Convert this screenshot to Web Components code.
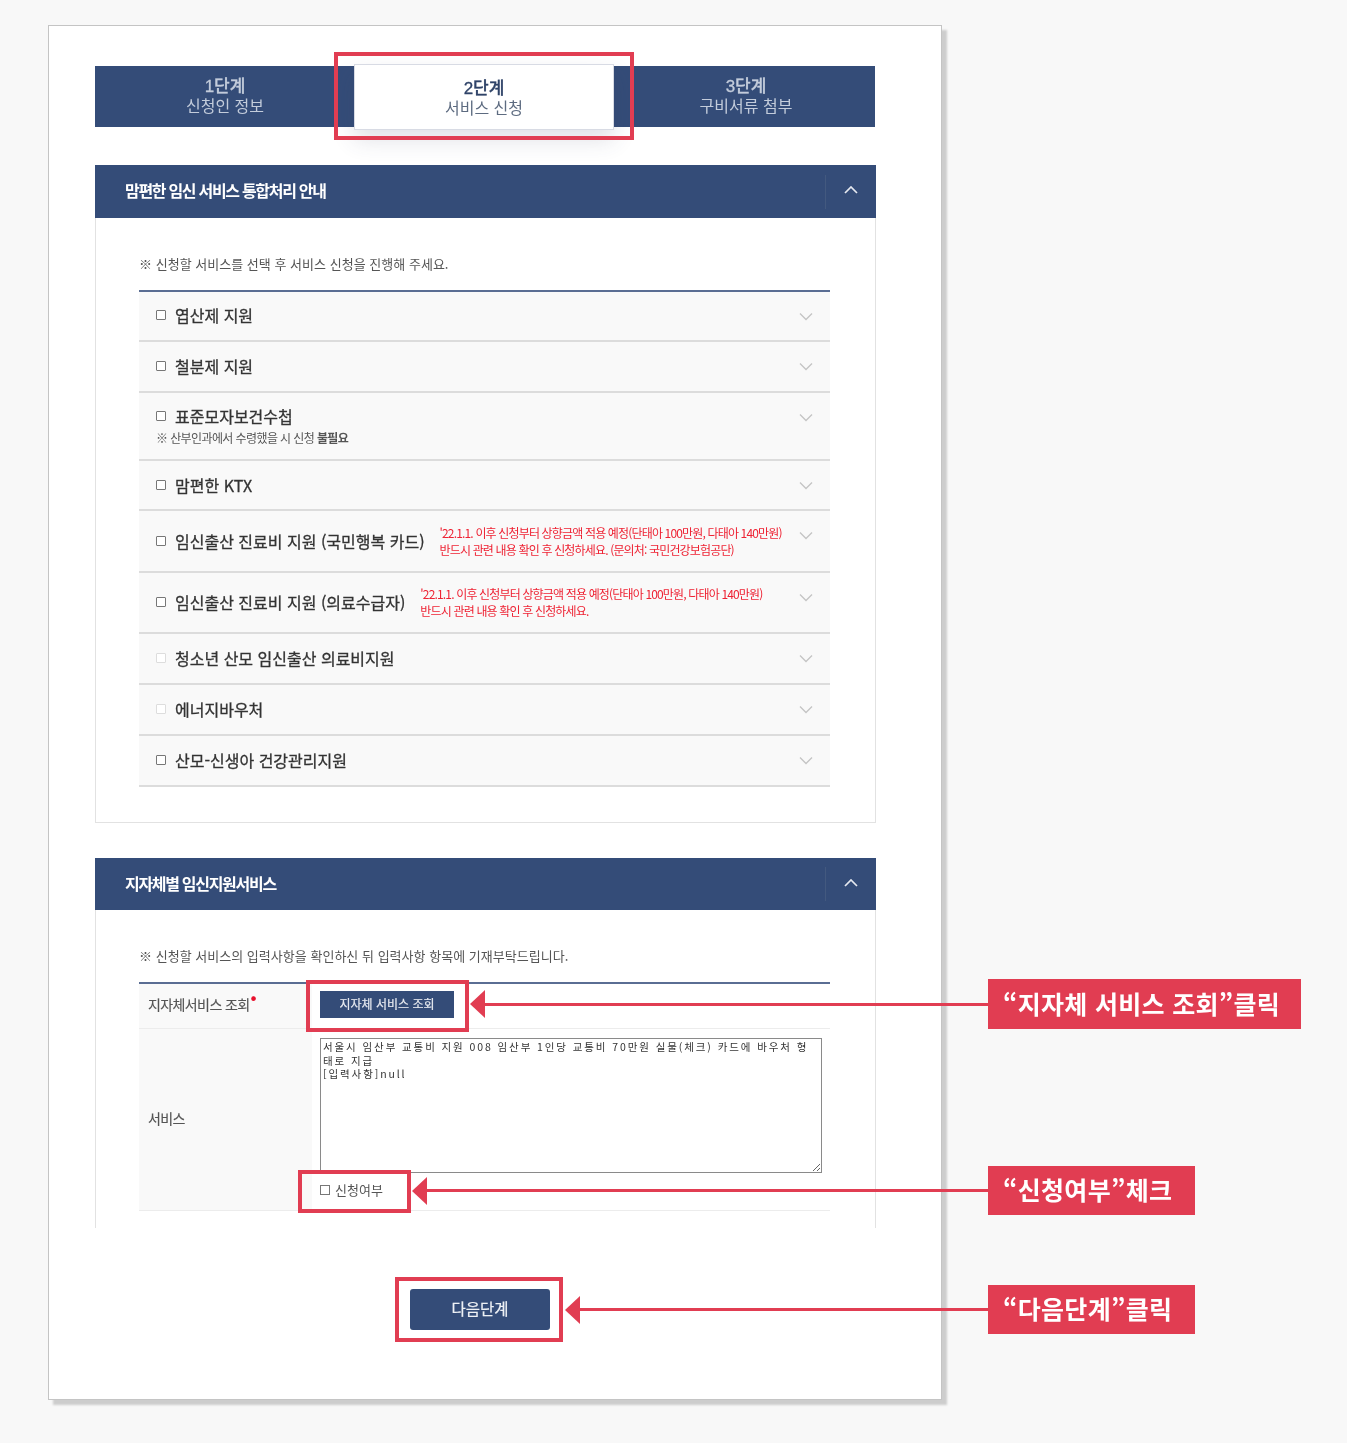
<!DOCTYPE html>
<html lang="ko">
<head>
<meta charset="utf-8">
<title>서비스 신청</title>
<style>
    html, body { margin: 0; padding: 0; background: #f8f8f8; }
    body { font-family: "Noto Sans CJK KR", "Noto Sans", sans-serif; color: #333; }
    b { font-weight: 700; }
</style>
</head>
<body>
<doc-page>
    <step-tabs></step-tabs>

    <service-panel title="맘편한 임신 서비스 통합처리 안내" notice="※ 신청할 서비스를 선택 후 서비스 신청을 진행해 주세요." pad="35">
        <service-row label="엽산제 지원" h="50" lift></service-row>
        <service-row label="철분제 지원" h="51" lift></service-row>
        <service-row label="표준모자보건수첩" h="68" stack>
            <span slot="sub">※ 산부인과에서 수령했을 시 신청 <b>불필요</b></span>
        </service-row>
        <service-row label="맘편한 KTX" h="50"></service-row>
        <service-row label="임신출산 진료비 지원 (국민행복 카드)" h="62">
            <span slot="note">'22.1.1. 이후 신청부터 상향금액 적용 예정(단태아 100만원, 다태아 140만원)<br>반드시 관련 내용 확인 후 신청하세요. (문의처: 국민건강보험공단)</span>
        </service-row>
        <service-row label="임신출산 진료비 지원 (의료수급자)" h="61" lift>
            <span slot="note">'22.1.1. 이후 신청부터 상향금액 적용 예정(단태아 100만원, 다태아 140만원)<br>반드시 관련 내용 확인 후 신청하세요.</span>
        </service-row>
        <service-row label="청소년 산모 임신출산 의료비지원" h="51" disabled lift></service-row>
        <service-row label="에너지바우처" h="51" disabled lift></service-row>
        <service-row label="산모-신생아 건강관리지원" h="51" lift></service-row>
    </service-panel>

    <service-panel title="지자체별 임신지원서비스" notice="※ 신청할 서비스의 입력사항을 확인하신 뒤 입력사항 항목에 기재부탁드립니다." pad="17" open-bottom>
        <local-form></local-form>
    </service-panel>

    <next-button>다음단계</next-button>

    <red-frame slot="over" x="334" y="52" w="300" h="88"></red-frame>
    <red-frame slot="over" x="306" y="980" w="163" h="52"></red-frame>
    <red-frame slot="over" x="298" y="1170" w="113" h="43"></red-frame>
    <red-frame slot="over" x="395" y="1277" w="168" h="65"></red-frame>

    <call-out slot="over" tip="470" y="979" w="313" h="50">“지자체 서비스 조회”클릭</call-out>
    <call-out slot="over" tip="412" y="1166" w="207" h="49">“신청여부”체크</call-out>
    <call-out slot="over" tip="565" y="1285" w="207" h="49">“다음단계”클릭</call-out>
</doc-page>

<script>
class docPage extends HTMLElement {
    constructor() {
        super();
        this.attachShadow({ mode: 'open' });
    }
    connectedCallback() {
        this.shadowRoot.innerHTML = `
            <style>
                :host {
                    display: block;
                    position: relative;
                    height: 1443px;
                    padding-top: 25px;
                    box-sizing: border-box;
                    overflow: hidden;
                }
                .sheet {
                    width: 894px;
                    height: 1375px;
                    margin-left: 48px;
                    padding: 40px 0 0 46px;
                    box-sizing: border-box;
                    background: #fff;
                    border: 1px solid #c4c4c4;
                    box-shadow: 5px 5px 2px #cdcdcd;
                    filter: blur(0.55px);
                }
            </style>
            <div class="sheet"><slot></slot></div>
            <slot name="over"></slot>
        `;
    }
}

class stepTabs extends HTMLElement {
    constructor() {
        super();
        this.attachShadow({ mode: 'open' });
    }
    connectedCallback() {
        const steps = [['1단계', '신청인 정보'], ['2단계', '서비스 신청'], ['3단계', '구비서류 첨부']];
        this.shadowRoot.innerHTML = `
            <style>
                :host {
                    display: grid;
                    grid-template-columns: 260px 260px 260px;
                    width: 780px;
                    height: 61px;
                    margin-bottom: 38px;
                    background: #344c78;
                    font-family: "Liberation Sans", "Noto Sans CJK KR", sans-serif;
                }
                div {
                    display: flex;
                    flex-direction: column;
                    align-items: center;
                    justify-content: center;
                    padding-top: 1px;
                    box-sizing: border-box;
                    color: #c3ccdb;
                    font-size: 16px;
                    line-height: 20px;
                }
                div:last-child { padding-left: 2px; }
                b { font-weight: 500; font-size: 17px; -webkit-text-stroke: .3px; }
                .on {
                    margin: -2px 1px -3px -1px;
                    padding-top: 4px;
                    background: #fff;
                    color: #5d6b80;
                    border: 1px solid #d8dbe4;
                    box-shadow: 0 10px 22px rgba(60, 70, 100, .16);
                    position: relative;
                }
                .on b { color: #2f4368; }
            </style>
            ${steps.map((s, i) => `<div class="${i === 1 ? 'on' : ''}"><b>${s[0]}</b><span>${s[1]}</span></div>`).join('')}
        `;
    }
}

class servicePanel extends HTMLElement {
    constructor() {
        super();
        this.attachShadow({ mode: 'open' });
    }
    connectedCallback() {
        const open = this.hasAttribute('open-bottom');
        this.shadowRoot.innerHTML = `
            <style>
                :host {
                    display: block;
                    width: 781px;
                    margin-bottom: 35px;
                }
                header {
                    display: flex;
                    align-items: center;
                    justify-content: space-between;
                    height: ${open ? 52 : 53}px;
                    background: #344c78;
                    color: #fff;
                    padding: 0 0 3px 30px;
                    box-sizing: border-box;
                }
                h2 {
                    margin: 0;
                    font-size: 16px;
                    font-weight: 700;
                    letter-spacing: -1.3px;
                }
                .toggle {
                    display: flex;
                    align-items: center;
                    justify-content: center;
                    width: 51px;
                    height: 34px;
                    margin-top: 3px;
                    padding-bottom: 3px;
                    box-sizing: border-box;
                    border-left: 1px solid #43597f;
                }
                .body {
                    padding: 34px 45px ${this.getAttribute('pad')}px 43px;
                    border: 1px solid #e2e2e2;
                    border-top: 0;
                    ${open ? 'border-bottom: 0;' : ''}
                }
                p {
                    margin: 0 0 14px;
                    font-size: 13px;
                    line-height: 24px;
                    color: #555;
                    white-space: nowrap;
                    letter-spacing: .02px;
                }
                .list { border-top: 2px solid #5a6d93; }
            </style>
            <header>
                <h2>${this.getAttribute('title')}</h2>
                <span class="toggle">
                    <svg width="14" height="8" viewBox="0 0 14 8" fill="none" stroke="#e6e9f0" stroke-width="1.7"><path d="M1 7l6-6 6 6"/></svg>
                </span>
            </header>
            <div class="body">
                <p>${this.getAttribute('notice')}</p>
                <div class="list"><slot></slot></div>
            </div>
        `;
    }
}

class serviceRow extends HTMLElement {
    constructor() {
        super();
        this.attachShadow({ mode: 'open' });
    }
    connectedCallback() {
        const stack = this.hasAttribute('stack');
        const lift = this.hasAttribute('lift');
        this.shadowRoot.innerHTML = `
            <style>
                :host {
                    display: flex;
                    align-items: center;
                    height: ${this.getAttribute('h')}px;
                    padding: 0 17px;
                    box-sizing: border-box;
                    background: #f9f9f9;
                    border-bottom: 2px solid #dcdcdc;
                }
                .main { flex: 1; min-width: 0; ${stack ? 'margin-top: -2px;' : ''} ${lift ? 'margin-bottom: 2px;' : ''} }
                .line { display: flex; align-items: center; }
                i {
                    flex: none;
                    width: 10px;
                    height: 10px;
                    margin-right: 9px;
                    box-sizing: border-box;
                    border: 1px solid ${this.hasAttribute('disabled') ? '#dddddd' : '#777'};
                    background: #fff;
                    border-radius: 1px;
                }
                label {
                    font-size: 16px;
                    line-height: 22px;
                    color: #333;
                    -webkit-text-stroke: .3px;
                    white-space: nowrap;
                }
                .sub { display: block; font-size: 12px; line-height: 16px; color: #555; letter-spacing: -.6px; ${stack ? 'margin-top: 3px;' : ''} }
                .note { margin-left: 15px; font-size: 12px; line-height: 17px; color: #ee2233; letter-spacing: -.84px; white-space: nowrap; }
                svg { flex: none; align-self: flex-start; margin-top: 19.5px; margin-left: 6px; }
            </style>
            <div class="main">
                <div class="line">
                    <i></i>
                    <label>${this.getAttribute('label')}</label>
                    <span class="note"><slot name="note"></slot></span>
                </div>
                <span class="sub"><slot name="sub"></slot></span>
            </div>
            <svg width="14" height="9" viewBox="0 0 14 9" fill="none" stroke="#c4c4c4" stroke-width="1.3"><path d="M1 1.5l6 6 6-6"/></svg>
        `;
    }
}

class localForm extends HTMLElement {
    constructor() {
        super();
        this.attachShadow({ mode: 'open' });
    }
    connectedCallback() {
        this.shadowRoot.innerHTML = `
            <style>
                :host {
                    display: grid;
                    grid-template-columns: 173px 1fr;
                    grid-template-rows: 45px 182px;
                }
                .th {
                    display: flex;
                    align-items: center;
                    padding: 0 0 4px 9px;
                    box-sizing: border-box;
                    background: #f9f9f9;
                    font-size: 14px;
                    letter-spacing: -.6px;
                    color: #555;
                    border-bottom: 1px solid #ececec;
                    -webkit-text-stroke: .15px;
                }
                .th sup { color: #e8112d; font-size: 18px; line-height: 0; margin: -16px 0 0 1px; }
                .td {
                    padding-left: 8px;
                    border-bottom: 1px solid #ececec;
                }
                .first { display: flex; align-items: center; padding-bottom: 3px; }
                button {
                    width: 134px;
                    height: 27px;
                    padding: 0 0 2px;
                    border: 0;
                    background: #344c78;
                    color: #e6e9f0;
                    font: inherit;
                    font-size: 12px;
                    -webkit-text-stroke: .2px;
                }
                textarea {
                    display: block;
                    width: 502px;
                    height: 135px;
                    margin: 9px 0 0;
                    padding: 1px 6px 1px 2px;
                    box-sizing: border-box;
                    border: 1px solid #8a8a8a;
                    font-family: "Noto Sans CJK KR", "DejaVu Sans Mono", monospace;
                    font-size: 10.5px;
                    line-height: 13.5px;
                    letter-spacing: 1.9px;
                    color: #333;
                    word-break: break-all;
                }
                .agree {
                    display: flex;
                    align-items: center;
                    margin-top: 7px;
                    font-size: 13px;
                    line-height: 20px;
                    color: #555;
                }
                .agree i {
                    width: 10px;
                    height: 10px;
                    margin-right: 5px;
                    box-sizing: border-box;
                    border: 1px solid #777;
                    background: #fff;
                }
            </style>
            <div class="th">지자체서비스 조회<sup>•</sup></div>
            <div class="td first"><button>지자체 서비스 조회</button></div>
            <div class="th">서비스</div>
            <div class="td">
                <textarea>서울시 임산부 교통비 지원 008 임산부 1인당 교통비 70만원 실물(체크) 카드에 바우처 형태로 지급
[입력사항]null</textarea>
                <div class="agree"><i></i>신청여부</div>
            </div>
        `;
    }
}

class nextButton extends HTMLElement {
    constructor() {
        super();
        this.attachShadow({ mode: 'open' });
    }
    connectedCallback() {
        this.shadowRoot.innerHTML = `
            <style>
                :host {
                    display: flex;
                    align-items: center;
                    justify-content: center;
                    width: 140px;
                    height: 41px;
                    margin: 61px 0 0 315px;
                    padding-bottom: 3px;
                    box-sizing: border-box;
                    background: #344c78;
                    border-radius: 3px;
                    color: #eef1f5;
                    font-size: 15.5px;
                    -webkit-text-stroke: .2px;
                }
            </style>
            <slot></slot>
        `;
    }
}

// the red marks lie over the screenshot, so these two are placed by coordinates
class redFrame extends HTMLElement {
    constructor() {
        super();
        this.attachShadow({ mode: 'open' });
    }
    connectedCallback() {
        this.shadowRoot.innerHTML = `
            <style>
                :host {
                    position: absolute;
                    left: ${this.getAttribute('x')}px;
                    top: ${this.getAttribute('y')}px;
                    width: ${this.getAttribute('w')}px;
                    height: ${this.getAttribute('h')}px;
                    box-sizing: border-box;
                    border: 4px solid #e13d52;
                }
            </style>
        `;
    }
}

class callOut extends HTMLElement {
    constructor() {
        super();
        this.attachShadow({ mode: 'open' });
    }
    connectedCallback() {
        const tip = Number(this.getAttribute('tip'));
        const h = this.getAttribute('h');
        this.shadowRoot.innerHTML = `
            <style>
                :host {
                    position: absolute;
                    left: ${tip}px;
                    top: ${this.getAttribute('y')}px;
                    width: ${988 - tip + Number(this.getAttribute('w'))}px;
                    height: ${h}px;
                    display: flex;
                    align-items: center;
                }
                svg { flex: none; }
                .line { flex: 1; height: 3px; background: #e13d52; }
                .label {
                    flex: none;
                    width: ${this.getAttribute('w')}px;
                    height: ${h}px;
                    padding-left: 15px;
                    box-sizing: border-box;
                    background: #e13d52;
                    color: #fff;
                    font-size: 25px;
                    line-height: ${h - 2}px;
                    letter-spacing: .3px;
                    font-weight: 700;
                    white-space: nowrap;
                    filter: blur(0.3px);
                }
            </style>
            <svg width="15" height="28" viewBox="0 0 15 28"><path d="M0 14L15 0v28z" fill="#e13d52"/></svg>
            <div class="line"></div>
            <div class="label"><slot></slot></div>
        `;
    }
}

customElements.define('doc-page', docPage);
customElements.define('step-tabs', stepTabs);
customElements.define('service-panel', servicePanel);
customElements.define('service-row', serviceRow);
customElements.define('local-form', localForm);
customElements.define('next-button', nextButton);
customElements.define('red-frame', redFrame);
customElements.define('call-out', callOut);
</script>
</body>
</html>
